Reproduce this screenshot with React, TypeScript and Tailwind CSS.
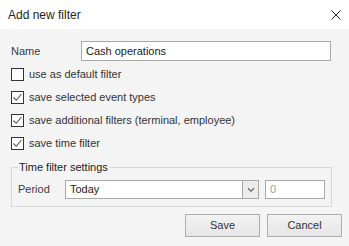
const font = { fontFamily: '"Liberation Sans", Arial, sans-serif' };

function Check({ checked, label }: { checked: boolean; label: string }) {
  return (
    <div className="flex items-center h-[13px]">
      <div className="w-[13px] h-[13px] border border-[#333] bg-white flex items-center justify-center">
        {checked && (
          <svg width="11" height="11" viewBox="0 0 11 11" fill="none">
            <path d="M1.5 5.5 L4.2 8.3 L9.5 2" stroke="#555" strokeWidth="1.1" />
          </svg>
        )}
      </div>
      <span className="ml-[5px] text-[#333] leading-none">{label}</span>
    </div>
  );
}

export default function App() {
  return (
    <div className="w-[349px] h-[246px] bg-[#f4f4f4] overflow-hidden text-[11px]" style={font}>
      <div className="h-[29px] bg-white flex items-center justify-between pl-[8px] pr-[8px]">
        <span className="text-[12px] text-[#1f1f1f]">Add new filter</span>
        <svg width="10" height="10" viewBox="0 0 10 10">
          <path d="M0.5 0.5 L9.5 9.5 M9.5 0.5 L0.5 9.5" stroke="#222" strokeWidth="1" />
        </svg>
      </div>

      <div className="px-[11px] pt-[12px]">
        <div className="flex items-center h-[20px]">
          <span className="w-[70px] text-[#3a3a48]">Name</span>
          <div className="w-[250px] h-[20px] border border-[#a8a8a8] bg-white flex items-center px-[4px] text-[#222]">
            Cash operations
          </div>
        </div>

        <div className="mt-[7px] flex flex-col gap-[10px]">
          <Check checked={false} label="use as default filter" />
          <Check checked label="save selected event types" />
          <Check checked label="save additional filters (terminal, employee)" />
          <Check checked label="save time filter" />
        </div>

        <fieldset className="mt-[9px] w-[320px] border border-[#d9d9d9] pl-[6px] pr-[6px] pt-[5px] pb-[7px]">
          <legend className="px-[1px] text-[#222] leading-[16px]">Time filter settings</legend>
          <div className="flex items-center h-[19px]">
            <span className="w-[47px] text-[#3a3a48]">Period</span>
            <div className="w-[194px] h-[19px] border border-[#a8a8a8] bg-white flex">
              <span className="flex-1 px-[4px] leading-[17px] text-[#222]">Today</span>
              <div className="w-[16px] h-full border-l border-[#a8a8a8] bg-[#ececec] flex items-center justify-center">
                <svg width="8" height="6" viewBox="0 0 8 6">
                  <path d="M1 1.2 L4 4.2 L7 1.2" stroke="#777" strokeWidth="1.6" fill="none" />
                </svg>
              </div>
            </div>
            <div className="ml-[6px] w-[60px] h-[19px] border border-[#a8a8a8] bg-white px-[4px] leading-[17px] text-[#9a9a9a]">
              0
            </div>
          </div>
        </fieldset>

        <div className="mt-[7px] -mr-[4px] flex justify-end gap-[7px]">
          <button className="w-[75px] h-[23px] border border-[#adadad] bg-gradient-to-b from-[#f2f2f2] to-[#e6e6e6] text-[#333]">
            Save
          </button>
          <button className="w-[75px] h-[23px] border border-[#adadad] bg-gradient-to-b from-[#f2f2f2] to-[#e6e6e6] text-[#333]">
            Cancel
          </button>
        </div>
      </div>
    </div>
  );
}
